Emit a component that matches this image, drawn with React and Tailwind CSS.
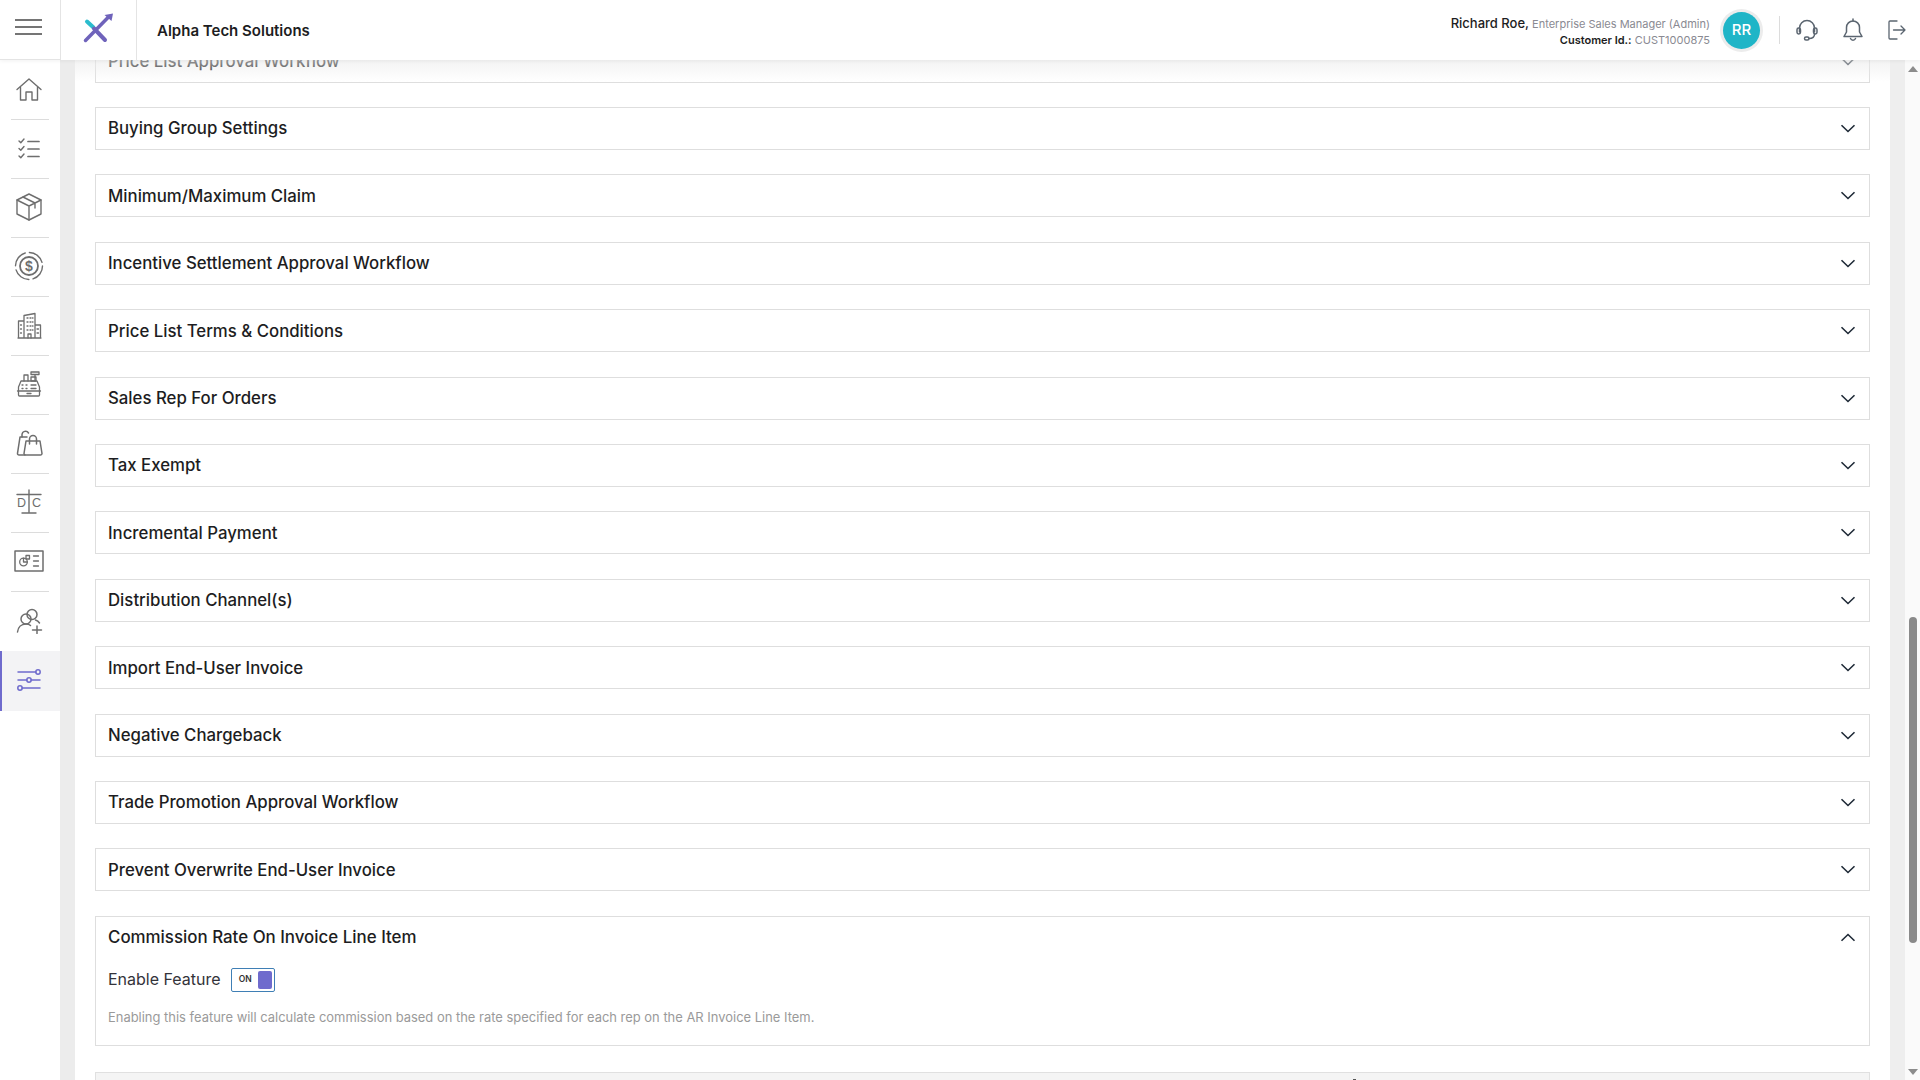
import React from "react";

const G = "#6e6e6e";
const Ic = ({ w, h, vb, children, stroke = G, sw = 1.4 }) => (
  <svg width={w} height={h} viewBox={vb} fill="none" stroke={stroke} strokeWidth={sw} strokeLinecap="round" strokeLinejoin="round">{children}</svg>
);

const icons = [
  <Ic w={26} h={23} vb="0 0 26 23"><path d="M1 11.500 13 1l12 10.500" /><path d="M4.500 9.500V22H10v-8h6v8h5.500V9.500" /></Ic>,
  <Ic w={22} h={21} vb="0 0 22 21"><path d="m1 3 1.800 1.800L6 1M1 10.500l1.800 1.800L6 8.500M1 18l1.800 1.800L6 16" /><path d="M10 3.500h11M10 11h11M10 18.500h11" strokeWidth="1.700" /></Ic>,
  <Ic w={26} h={28} vb="0 0 26 28"><path d="M13 1 25 7v14l-12 6-12-6V7z" /><path d="m1 7 12 6 12-6M13 13v14M7 4l12 6v5" /></Ic>,
  <Ic w={30} h={30} vb="0 0 30 30">
    <circle cx="15" cy="15" r="13.500" strokeDasharray="17 4.200" />
    <circle cx="15" cy="15" r="9" strokeWidth="1.800" />
    <text x="15" y="20" textAnchor="middle" fontSize="14" fontWeight="700" fill={G} stroke="none" fontFamily="Liberation Sans, sans-serif">$</text>
  </Ic>,
  <Ic w={25} h={27} vb="0 0 25 27" sw={1.300}>
    <path d="M7 26V3.500L18 1.500V26M7 9H1.500v17M18 13h5.500v13M1 26h23" />
    <path d="M10 6h1M13 6h1M15.500 6h.5M10 10h1M13 10h1M15.500 10h.5M10 14h1M13 14h1M15.500 14h.5M10 18h1M13 18h1M15.500 18h.5M3.500 13h1M3.500 17h1M3.500 21h1M20 17h1.500M20 21h1.500" />
    <path d="M11 26v-4h3v4" />
  </Ic>,
  <Ic w={26} h={26} vb="0 0 26 26" sw={1.300}>
    <path d="M2.500 16 5 10h16l2.500 6v8a1 1 0 0 1-1 1h-19a1 1 0 0 1-1-1z" />
    <path d="M1.500 20h23M8 10V4h4v6M15 1h8v2.500h-8zM19 3.500V10" />
    <path d="M15 6h5v4h-5zM6 14h1M10 14h1M6 17.500h1M10 17.500h1M15 14h5M15 17.500h5M11 22.500h4" />
  </Ic>,
  <Ic w={27} h={26} vb="0 0 27 26" sw={1.500}>
    <path d="M9 25H3a1.500 1.500 0 0 1-1.500-1.700L4 7h7" />
    <path d="M6 7V4.500a3.500 3.500 0 0 1 6.500-1.500" />
    <path d="M10 11h14l2 12.500a1.500 1.500 0 0 1-1.500 1.500H9.500A1.500 1.500 0 0 1 8 23.500z" />
    <path d="M13.500 14V9a3.500 3.500 0 0 1 7 0v5" />
  </Ic>,
  <Ic w={28} h={26} vb="0 0 28 26" sw={1.400}>
    <path d="M14 1v22M7 24h14M2 5.500h24M14 3.500v2" />
    <text x="6.500" y="18" textAnchor="middle" fontSize="12.500" fill={G} stroke="none" fontFamily="Liberation Sans, sans-serif">D</text>
    <text x="21.500" y="18" textAnchor="middle" fontSize="12.500" fill={G} stroke="none" fontFamily="Liberation Sans, sans-serif">C</text>
  </Ic>,
  <Ic w={30} h={22} vb="0 0 30 22" sw={1.300}>
    <rect x="1" y="1" width="28" height="20" strokeWidth="1.500" />
    <circle cx="9.500" cy="12" r="3.800" />
    <path d="M9.500 8.200V12h3.800" />
    <path d="M12 5.500h3.500V9H12zM19.500 6h5M19.500 11h5M19.500 16h5" />
  </Ic>,
  <Ic w={27} h={26} vb="0 0 27 26" sw={1.500}>
    <circle cx="16" cy="6.500" r="5" />
    <circle cx="10" cy="11" r="5" />
    <path d="M1.500 24c.5-4.500 3.500-8 8.500-8 2 0 3.500.5 4.500 1.500M19.500 12c1.500.5 3 1.500 4 3" />
    <path d="M21 18v7.500M16.500 22h9" />
  </Ic>,
  <Ic w={24} h={22} vb="0 0 24 22" stroke="#6f6bcd" sw={1.500}>
    <path d="M1 3h18M1 11h9M14 11h9M5 19h18" />
    <circle cx="21" cy="3" r="2.200" />
    <circle cx="12" cy="11" r="2.200" />
    <circle cx="3" cy="19" r="2.200" />
  </Ic>,
];

const rows = [
  "Price List Approval Workflow",
  "Buying Group Settings",
  "Minimum/Maximum Claim",
  "Incentive Settlement Approval Workflow",
  "Price List Terms & Conditions",
  "Sales Rep For Orders",
  "Tax Exempt",
  "Incremental Payment",
  "Distribution Channel(s)",
  "Import End-User Invoice",
  "Negative Chargeback",
  "Trade Promotion Approval Workflow",
  "Prevent Overwrite End-User Invoice",
];

const Chevron = ({ up }) => (
  <svg width="16" height="9" viewBox="0 0 16 9" fill="none" stroke="#1f2a37" strokeWidth="1.600" className={up ? "rotate-180" : ""}>
    <path d="m1.500 1.200 6.500 6.300 6.500-6.300" />
  </svg>
);

export default function App() {
  return (
    <div className="h-screen w-full overflow-hidden flex flex-col bg-white text-[#1d1d22] font-['Inter','Open_Sans',sans-serif]">
      <header className="relative z-20 h-[60px] shrink-0 bg-white flex items-center shadow-[0_1px_4px_rgba(0,0,0,0.06)]">
        <button className="w-[61px] h-full border-r border-b border-[#e4e4e4] flex flex-col items-center justify-center gap-[5px] pb-[6px] pr-[4px]">
          <span className="block w-[27px] h-[2px] bg-[#757575]" />
          <span className="block w-[27px] h-[2px] bg-[#757575]" />
          <span className="block w-[27px] h-[2px] bg-[#757575]" />
        </button>
        <div className="w-[76px] h-full border-r border-[#e4e4e4] flex items-center justify-center pr-[1px]">
          <svg width="34" height="34" viewBox="0 0 34 34" fill="none" strokeLinecap="round">
            <path d="M6 8.500 12.500 14.500" stroke="#2bbccd" strokeWidth="4" />
            <path d="M13 15.500 24 27" stroke="#6f63bb" strokeWidth="4" />
            <path d="M4.500 27.500 27 4.500" stroke="#6f63bb" strokeWidth="3.500" />
            <path d="M23.500 2 32 .5 30.500 8z" fill="#6f63bb" />
          </svg>
        </div>
        <div className="ml-[20px] pt-[2px] text-[15px] font-semibold">Alpha Tech Solutions</div>
        <div className="ml-auto flex items-center">
          <div className="text-right pt-[2px]">
            <div className="text-[11px] leading-[16px] text-[#8a8a92]"><span className="text-[13px] font-medium text-[#1d1d22]">Richard Roe,</span> Enterprise Sales Manager (Admin)</div>
            <div className="text-[11px] leading-[16px] text-[#8a8a92]"><span className="font-semibold text-[#1d1d22]">Customer Id.:</span> CUST1000875</div>
          </div>
          <div className="ml-[13px] w-[37px] h-[37px] rounded-full bg-[#1fb5c7] ring-[3px] ring-[#ececec] flex items-center justify-center text-white text-[15px] font-medium">RR</div>
          <div className="ml-[19px] w-px h-[28px] bg-[#dcdcdc]" />
          <div className="ml-[16px] mr-[14px] flex items-center gap-[24px]">
            <Ic w={22} h={24} vb="0 0 22 24" stroke="#5b6570" sw={1.500}>
              <path d="M3.500 14V10a7.500 7.500 0 0 1 15 0v4" />
              <rect x="1" y="10" width="3.500" height="6" rx="1.700" />
              <rect x="17.500" y="10" width="3.500" height="6" rx="1.700" />
              <path d="M18.500 16c0 3-2.500 4.500-5.500 4.500" />
              <rect x="8.500" y="19" width="4.500" height="3" rx="1.500" />
            </Ic>
            <Ic w={22} h={24} vb="0 0 22 24" stroke="#5b6570" sw={1.500}>
              <path d="M11 3a6.500 6.500 0 0 0-6.500 6.500V14L2 18.500h18L17.500 14V9.500A6.500 6.500 0 0 0 11 3z" />
              <path d="M11 1v2M8.500 20.500a2.700 2.700 0 0 0 5 0" />
            </Ic>
            <Ic w={18} h={20} vb="0 0 18 20" stroke="#5b6570" sw={1.300}>
              <path d="M9 1H2a1 1 0 0 0-1 1v16a1 1 0 0 0 1 1h7" />
              <path d="M5.500 10H17M13 6l4 4-4 4" />
            </Ic>
          </div>
        </div>
      </header>

      <div className="flex flex-1 min-h-0">
        <aside className="relative z-10 w-[60px] shrink-0 bg-white flex flex-col pt-px">
          {icons.map((ic, i) => {
            const active = i === 10;
            return (
              <div key={i} className={active ? "h-[60px] border-l-2 border-[#6f6bcd] bg-[#f3f3f5] flex items-center justify-center pr-[4px] pb-[2px]" : "h-[59px] flex flex-col"}>
                {active ? ic : (
                  <>
                    <div className="flex-1 flex items-center justify-center pr-[2px] pb-[2px]">{ic}</div>
                    {i < 9 && <div className="mx-[11px] h-px bg-[#dcdcdc]" />}
                  </>
                )}
              </div>
            );
          })}
        </aside>
        <div className="w-[15px] shrink-0 bg-[#ececec]" />

        <main className="relative flex-1 min-w-0 overflow-hidden bg-white px-[20px]">
          <div className="absolute inset-x-0 top-0 h-[22px] z-10 bg-gradient-to-b from-[#ebebeb99] to-[#ffffff00]" />
          <div className="-mt-[20.400px] flex flex-col gap-[24.400px]">
            {rows.map((t) => (
              <div key={t} className="h-[43px] shrink-0 border border-[#dedede] pl-[12px] pr-[13px] flex items-center justify-between">
                <span className="text-[16.800px] font-medium pt-px">{t}</span>
                <Chevron />
              </div>
            ))}
            <div className="h-[130px] shrink-0 border border-[#dedede] pl-[12px] pr-[13px] pt-[10px]">
              <div className="flex items-center justify-between h-[21px]">
                <span className="text-[16.900px] font-medium">Commission Rate On Invoice Line Item</span>
                <Chevron up />
              </div>
              <div className="mt-[20px] flex items-center h-[24px]">
                <span className="text-[16px] text-[#33333a] -mt-px">Enable Feature</span>
                <div className="ml-[10px] w-[44px] h-[24px] border border-[#3f7fb5] rounded-[2px] flex items-center justify-between pl-[7px] pr-[2px]">
                  <span className="text-[8.500px] font-semibold text-[#333]">ON</span>
                  <span className="w-[14px] h-[18px] rounded-[2px] bg-[#6f6bcd]" />
                </div>
              </div>
              <p className="mt-[16px] text-[12.950px] text-[#9a9a9a]">Enabling this feature will calculate commission based on the rate specified for each rep on the AR Invoice Line Item.</p>
            </div>
            <div className="relative mt-[1.500px] h-[40px] shrink-0 border border-[#e0e0e0] bg-[#f4f4f4]">
              <span className="absolute left-[1257px] top-[6px] w-[3px] h-px bg-[#555]" />
            </div>
          </div>
        </main>

        <div className="w-[15px] shrink-0 bg-[#eeeeee]" />
        <div className="w-[15px] shrink-0 bg-[#fafafa] flex flex-col items-center pt-[6px] pb-[5px]">
          <span className="w-0 h-0 border-x-[5px] border-x-transparent border-b-[6px] border-b-[#8c8c8c]" />
          <span className="mt-[545px] w-[8px] h-[326px] rounded-[4px] bg-[#8a8a8a]" />
          <span className="mt-auto w-0 h-0 border-x-[5px] border-x-transparent border-t-[6px] border-t-[#8c8c8c]" />
        </div>
      </div>
    </div>
  );
}
